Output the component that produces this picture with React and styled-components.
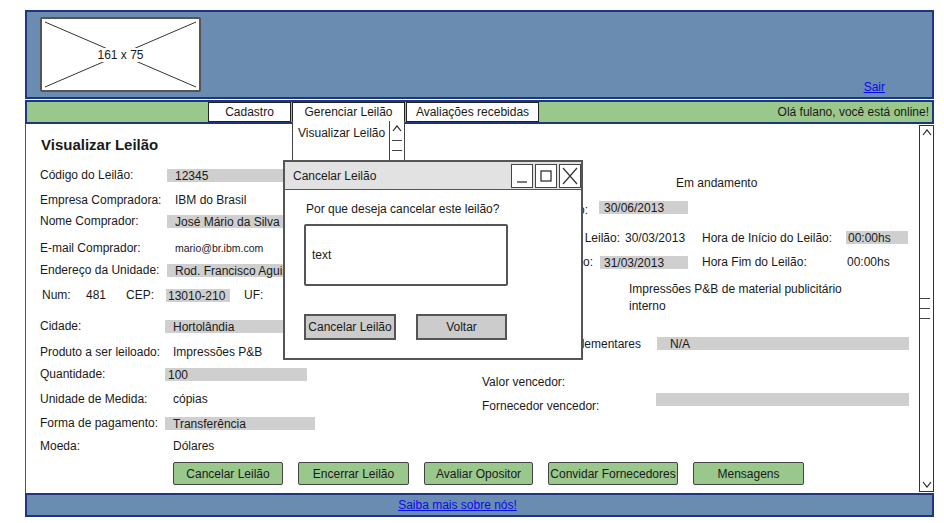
import styled, { createGlobalStyle } from 'styled-components';

const GlobalStyle = createGlobalStyle`
  body {
    margin: 0;
    background: #fff;
    font-family: 'Liberation Sans', Arial, sans-serif;
    font-size: 12px;
    color: #1a1a1a;
  }
`;

const Page = styled.div`
  position: relative;
  width: 909px;
  margin: 10px 0 0 25px;
`;

const Header = styled.header`
  height: 89px;
  box-sizing: border-box;
  border: 2px solid #1d3682;
  background: #6b8cb1;
  display: flex;
  justify-content: space-between;
  align-items: flex-end;
  padding: 5px 47px 5px 13px;
`;

const Placeholder = styled.div`
  position: relative;
  width: 161px;
  height: 75px;
  box-sizing: border-box;
  border: 2px solid #555;
  border-radius: 2px;
  background: #fff;
  display: flex;
  align-items: center;
  justify-content: center;
  svg {
    position: absolute;
    inset: 0;
  }
`;

const PlaceholderText = styled.span`
  position: relative;
  background: #fff;
  padding: 0 3px;
  font-size: 12px;
`;

const Link = styled.a`
  color: #0a0af0;
  text-decoration: underline;
  font-size: 12px;
  line-height: 14px;
  margin-bottom: ${(p) => p.$mb || 0}px;
  cursor: pointer;
`;

const NavBar = styled.nav`
  margin-top: 1px;
  height: 24px;
  box-sizing: border-box;
  border: 2px solid #1d3682;
  background: #99c78c;
  display: flex;
  align-items: flex-start;
  padding-left: 181px;
`;

const Tabs = styled.div`
  display: flex;
  gap: 1px;
`;

const Tab = styled.div`
  position: relative;
  width: ${(p) => p.$w}px;
  height: 20px;
  box-sizing: border-box;
  border: 1px solid #222;
  background: #fff;
  text-align: center;
  line-height: 18px;
`;

const Welcome = styled.span`
  margin-left: auto;
  padding-right: 3px;
  line-height: 20px;
`;

const Dropdown = styled.div`
  position: absolute;
  top: 100%;
  left: -1px;
  width: 113px;
  height: 60px;
  box-sizing: border-box;
  border: 1px solid #444;
  border-top: none;
  background: #fff;
  display: flex;
  text-align: left;
  z-index: 2;
`;

const DropdownItem = styled.div`
  flex: 1;
  overflow: hidden;
  white-space: nowrap;
  padding: 2px 0 0 5px;
  line-height: 20px;
`;

const MiniScroll = styled.div`
  width: 14px;
  border-left: 1px solid #444;
  display: flex;
  flex-direction: column;
  align-items: center;
  padding-top: 4px;
  gap: 6px;
`;

const Dash = styled.span`
  width: 10px;
  height: 1px;
  background: #444;
  margin-top: ${(p) => p.$mt || 0}px;
`;

const Content = styled.main`
  height: 369px;
  display: flex;
  border-left: 1px solid #555;
  background: #fff;
`;

const Main = styled.div`
  flex: 1;
  padding: 11px 10px 0 14px;
`;

const Title = styled.h1`
  margin: 0 0 10px 1px;
  font-size: 15px;
  font-weight: bold;
  line-height: 20px;
`;

const Columns = styled.div`
  display: grid;
  grid-template-columns: 442px 1fr;
`;

const Col = styled.div`
  display: flex;
  flex-direction: column;
  padding-top: ${(p) => p.$top || 0}px;
`;

const Row = styled.div`
  display: flex;
  align-items: flex-start;
  height: ${(p) => p.$h}px;
  line-height: 20px;
  white-space: nowrap;
`;

const Label = styled.span`
  flex: none;
  width: ${(p) => (p.$w ? `${p.$w}px` : 'auto')};
  margin-left: ${(p) => p.$ml || 0}px;
  ${(p) => p.$right && 'display: flex; justify-content: flex-end;'}
`;

const Value = styled.span`
  flex: none;
  width: ${(p) => (p.$w ? `${p.$w}px` : 'auto')};
  margin-left: ${(p) => p.$ml || 0}px;
  font-size: ${(p) => p.$size || 12}px;
`;

const WrapValue = styled.span`
  width: 240px;
  white-space: normal;
  line-height: 17px;
  padding-top: 1px;
`;

const Field = styled.span`
  display: block;
  box-sizing: border-box;
  ${(p) => (p.$grow ? 'flex: 1;' : `flex: none; width: ${p.$w}px;`)}
  height: 13px;
  margin-top: ${(p) => p.$mt ?? 4}px;
  margin-left: ${(p) => p.$ml || 0}px;
  padding-left: ${(p) => p.$pl ?? 8}px;
  background: #cfcfcf;
  line-height: 15px;
  white-space: nowrap;
`;

const ButtonBar = styled.div`
  display: flex;
  gap: 15px;
  margin: 2px 0 0 133px;
`;

const GreenButton = styled.button`
  width: ${(p) => p.$w}px;
  height: 23px;
  box-sizing: border-box;
  border: 1px solid #444;
  border-radius: 2px;
  background: #99c78c;
  font-family: inherit;
  font-size: 12px;
  color: #1a1a1a;
  padding: 0;
`;

const Scrollbar = styled.div`
  width: 15px;
  box-sizing: border-box;
  margin: 1px 0;
  border: 1px solid #333;
  display: flex;
  flex-direction: column;
  justify-content: space-between;
  align-items: center;
  padding: 3px 0;
`;

const Thumb = styled.div`
  display: flex;
  flex-direction: column;
  align-self: flex-start;
  gap: 9px;
`;

const ThumbLine = styled.span`
  width: 10px;
  height: 1px;
  background: #444;
`;

const Footer = styled.footer`
  height: 24px;
  box-sizing: border-box;
  border: 2px solid #1d3682;
  background: #6b8cb1;
  text-align: center;
  padding-right: 44px;
  line-height: 20px;
`;

const Dialog = styled.div`
  position: absolute;
  left: 258px;
  top: 150px;
  width: 300px;
  height: 200px;
  box-sizing: border-box;
  border: 2px solid #555;
  background: #fff;
  z-index: 3;
`;

const DialogTitle = styled.div`
  height: 28px;
  box-sizing: border-box;
  border-bottom: 1px solid #555;
  background: #e2e2e2;
  display: flex;
  align-items: center;
  padding-left: 8px;
`;

const WindowButtons = styled.div`
  margin-left: auto;
  display: flex;
  gap: 2px;
`;

const WindowButton = styled.span`
  width: 22px;
  height: 24px;
  box-sizing: border-box;
  border: 1px solid #444;
  background: #fff;
  display: flex;
  align-items: center;
  justify-content: center;
`;

const DialogBody = styled.div`
  padding: 9px 0 0 19px;
`;

const Prompt = styled.div`
  margin-left: 2px;
  line-height: 20px;
`;

const TextBox = styled.div`
  margin-top: 5px;
  width: 204px;
  height: 62px;
  box-sizing: border-box;
  border: 2px solid #555;
  border-radius: 2px;
  display: flex;
  align-items: center;
  padding-left: 6px;
`;

const DialogActions = styled.div`
  display: flex;
  gap: 20px;
  margin-top: 28px;
`;

const GrayButton = styled.button`
  width: ${(p) => p.$w}px;
  height: 26px;
  box-sizing: border-box;
  border: 2px solid #555;
  background: #cccccc;
  font-family: inherit;
  font-size: 12px;
  color: #1a1a1a;
  padding: 0;
`;

const Chevron = ({ down }) => (
  <svg width="10" height="7" viewBox="0 0 10 7">
    <path
      d={down ? 'M1 1 L5 6 L9 1' : 'M1 6 L5 1 L9 6'}
      fill="none"
      stroke="#222"
      strokeWidth="1.2"
    />
  </svg>
);

const leftRows = [
  { h: 25, label: 'Código do Leilão:', field: '12345', w: 120 },
  { h: 21, label: 'Empresa Compradora:', value: 'IBM do Brasil' },
  { h: 27, label: 'Nome Comprador:', field: 'José Mário da Silva', w: 140 },
  { h: 22, label: 'E-mail Comprador:', value: 'mario@br.ibm.com', size: 10.5 },
  { h: 25, label: 'Endereço da Unidade:', field: 'Rod. Francisco Aguirre Proença', w: 185 },
];

const lowerRows = [
  { h: 26, label: 'Cidade:', field: 'Hortolândia', w: 130 },
  { h: 22, label: 'Produto a ser leiloado:', value: 'Impressões P&B' },
  { h: 25, label: 'Quantidade:', field: '100', w: 142, pl: 3 },
  { h: 24, label: 'Unidade de Medida:', value: 'cópias' },
  { h: 23, label: 'Forma de pagamento:', field: 'Transferência', w: 150 },
  { h: 24, label: 'Moeda:', value: 'Dólares' },
];

const renderRow = (r, lw) => (
  <Row $h={r.h} key={r.label}>
    <Label $w={lw}>{r.label}</Label>
    {r.field !== undefined ? (
      <Field $w={r.w} $pl={r.pl}>{r.field}</Field>
    ) : (
      <Value $ml={8} $size={r.size}>{r.value}</Value>
    )}
  </Row>
);

export default function App() {
  return (
    <>
      <GlobalStyle />
      <Page>
        <Header>
          <Placeholder>
            <svg width="157" height="71" viewBox="0 0 157 71">
              <line x1="3" y1="3" x2="154" y2="68" stroke="#333" strokeWidth="1" />
              <line x1="154" y1="3" x2="3" y2="68" stroke="#333" strokeWidth="1" />
            </svg>
            <PlaceholderText>161 x 75</PlaceholderText>
          </Placeholder>
          <Link $mb={-2}>Sair</Link>
        </Header>

        <NavBar>
          <Tabs>
            <Tab $w={83}>Cadastro</Tab>
            <Tab $w={113}>
              Gerenciar Leilão
              <Dropdown>
                <DropdownItem>Visualizar Leilão</DropdownItem>
                <MiniScroll>
                  <Chevron />
                  <Dash $mt={2} />
                  <Dash $mt={3} />
                </MiniScroll>
              </Dropdown>
            </Tab>
            <Tab $w={133}>Avaliações recebidas</Tab>
          </Tabs>
          <Welcome>Olá fulano, você está online!</Welcome>
        </NavBar>

        <Content>
          <Main>
            <Title>Visualizar Leilão</Title>
            <Columns>
              <Col>
                {leftRows.map((r) => renderRow(r, 127))}
                <Row $h={31}>
                  <Label $ml={2} $w={44}>Num:</Label>
                  <Value $w={40}>481</Value>
                  <Value $w={40}>CEP:</Value>
                  <Field $w={64} $pl={2}>13010-210</Field>
                  <Value $ml={14}>UF:</Value>
                </Row>
                {lowerRows.map((r) => renderRow(r, 125))}
              </Col>

              <Col $top={8}>
                <Row $h={27}>
                  <Label $w={194}>Status do Leilão:</Label>
                  <Value>Em andamento</Value>
                </Row>
                <Row $h={28}>
                  <Label $w={106} $right>Publicação:</Label>
                  <Field $w={89} $ml={11} $pl={5} $mt={1}>30/06/2013</Field>
                </Row>
                <Row $h={24}>
                  <Label $w={138} $right>Data de Início do Leilão:</Label>
                  <Value $w={77} $ml={5}>30/03/2013</Value>
                  <Label $w={144}>Hora de Início do Leilão:</Label>
                  <Field $w={62} $pl={2} $mt={3}>00:00hs</Field>
                </Row>
                <Row $h={28}>
                  <Label $w={111} $right>Data Fim do Leilão:</Label>
                  <Field $w={88} $ml={7} $pl={4}>31/03/2013</Field>
                  <Label $w={145} $ml={14}>Hora Fim do Leilão:</Label>
                  <Value>00:00hs</Value>
                </Row>
                <Row $h={54}>
                  <Label $w={147}>Descrição:</Label>
                  <WrapValue>Impressões P&amp;B de material publicitário interno</WrapValue>
                </Row>
                <Row $h={38}>
                  <Label $w={159} $right>Informações Complementares</Label>
                  <Field $grow $ml={16} $pl={13} $mt={3}>N/A</Field>
                </Row>
                <Row $h={24}>
                  <Label>Valor vencedor:</Label>
                </Row>
                <Row $h={24}>
                  <Label $w={174}>Fornecedor vencedor:</Label>
                  <Field $grow $mt={-3} />
                </Row>
              </Col>
            </Columns>

            <ButtonBar>
              <GreenButton $w={110}>Cancelar Leilão</GreenButton>
              <GreenButton $w={111}>Encerrar Leilão</GreenButton>
              <GreenButton $w={109}>Avaliar Opositor</GreenButton>
              <GreenButton $w={130}>Convidar Fornecedores</GreenButton>
              <GreenButton $w={111}>Mensagens</GreenButton>
            </ButtonBar>
          </Main>

          <Scrollbar>
            <Chevron />
            <Thumb>
              <ThumbLine />
              <ThumbLine />
              <ThumbLine />
            </Thumb>
            <Chevron down />
          </Scrollbar>
        </Content>

        <Footer>
          <Link>Saiba mais sobre nós!</Link>
        </Footer>

        <Dialog>
          <DialogTitle>
            Cancelar Leilão
            <WindowButtons>
              <WindowButton>
                <svg width="14" height="16" viewBox="0 0 14 16">
                  <line x1="2" y1="14" x2="12" y2="14" stroke="#333" strokeWidth="1.3" />
                </svg>
              </WindowButton>
              <WindowButton>
                <svg width="14" height="16" viewBox="0 0 14 16">
                  <rect x="2" y="3" width="10" height="10" fill="none" stroke="#333" strokeWidth="1.3" />
                </svg>
              </WindowButton>
              <WindowButton>
                <svg width="16" height="18" viewBox="0 0 16 18">
                  <path d="M1 1 L15 17 M15 1 L1 17" stroke="#333" strokeWidth="1.2" />
                </svg>
              </WindowButton>
            </WindowButtons>
          </DialogTitle>
          <DialogBody>
            <Prompt>Por que deseja cancelar este leilão?</Prompt>
            <TextBox>text</TextBox>
            <DialogActions>
              <GrayButton $w={92}>Cancelar Leilão</GrayButton>
              <GrayButton $w={91}>Voltar</GrayButton>
            </DialogActions>
          </DialogBody>
        </Dialog>
      </Page>
    </>
  );
}
